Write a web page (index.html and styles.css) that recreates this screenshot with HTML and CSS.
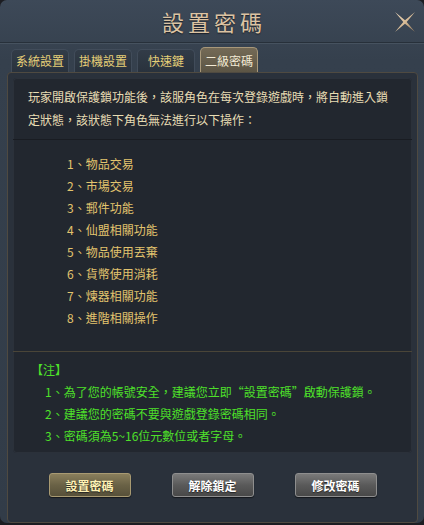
FILE: index.html
```html
<!DOCTYPE html>
<html>
<head>
<meta charset="utf-8">
<link rel="stylesheet" href="styles.css">
</head>
<body>
<div class="window">
    <div class="titlebar">
        <h1 class="title">設置密碼</h1>
        <svg class="close" width="22" height="22" viewBox="0 0 22 22">
            <defs>
                <linearGradient id="xg" x1="0" y1="0" x2="1" y2="1">
                    <stop offset="0" stop-color="#f0dcc0"/>
                    <stop offset="0.5" stop-color="#d8bc98"/>
                    <stop offset="1" stop-color="#8c7458"/>
                </linearGradient>
            </defs>
            <polygon points="1,1 11,9.3 21,1 12.7,11 21,21 11,12.7 1,21 9.3,11" fill="url(#xg)"/>
        </svg>
    </div>

    <div class="tabs">
        <div class="tab">系統設置</div>
        <div class="tab">掛機設置</div>
        <div class="tab">快速鍵</div>
        <div class="tab active">二級密碼</div>
    </div>

    <div class="frame">
        <div class="panel">
            <div class="intro">
                玩家開啟保護鎖功能後，該服角色在每次登錄遊戲時，將自動進入鎖<br>定狀態，該狀態下角色無法進行以下操作：
            </div>
            <ul class="limits">
                <li>1、物品交易</li>
                <li>2、市場交易</li>
                <li>3、郵件功能</li>
                <li>4、仙盟相關功能</li>
                <li>5、物品使用丟棄</li>
                <li>6、貨幣使用消耗</li>
                <li>7、煉器相關功能</li>
                <li>8、進階相關操作</li>
            </ul>
            <div class="note">
                <div class="note-head">【注】</div>
                <div class="note-line">1、為了您的帳號安全，建議您立即“設置密碼”啟動保護鎖。</div>
                <div class="note-line">2、建議您的密碼不要與遊戲登錄密碼相同。</div>
                <div class="note-line">3、密碼須為5~16位元數位或者字母。</div>
            </div>
        </div>
        <div class="buttons">
            <button class="btn gold">設置密碼</button>
            <button class="btn">解除鎖定</button>
            <button class="btn">修改密碼</button>
        </div>
    </div>
</div>
</body>
</html>
```

FILE: styles.css
```css
body {
    margin: 0;
    background-color: #1c1d22;
    font-family: "Noto Sans CJK TC", "Noto Sans CJK SC", sans-serif;
    font-size: 12px;
}

.window {
    width: 424px;
    height: 523px;
    background: linear-gradient(#3d4958, #35404d 60px, #323c48);
    border-radius: 7px;
    overflow: hidden;
}

.titlebar {
    height: 42px;
    border-bottom: 1px solid #27303a;
    box-shadow: 0 1px 0 #46525f;
    display: flex;
    align-items: center;
    justify-content: center;
    position: relative;
}

.title {
    margin: 0;
    font-size: 22px;
    font-weight: normal;
    letter-spacing: 4px;
    padding-left: 4px;
    color: #dcc3a2;
    text-shadow: 0 1px 1px #1c2028;
}

.close {
    position: absolute;
    right: 8px;
    top: 11px;
}

.tabs {
    display: flex;
    align-items: flex-end;
    gap: 5px;
    padding-left: 11px;
    height: 29px;
}

.tab {
    width: 56px;
    height: 22px;
    line-height: 22px;
    text-align: center;
    color: #e6cf78;
    background: linear-gradient(#323c48, #29323d);
    border: 1px solid #414c5a;
    border-bottom: none;
    border-radius: 5px 5px 0 0;
}

.tab.active {
    height: 24px;
    line-height: 26px;
    color: #f2ead4;
    background: linear-gradient(#746a56, #5c5545);
    border-color: #a8987a;
}

.frame {
    margin: 0 6px 0 7px;
    height: 444px;
    border: 1px solid #4f4a41;
    border-radius: 4px;
    background-color: #2a313b;
    padding: 5px 5px 0 5px;
}

.panel {
    background-color: #22272f;
    border-radius: 4px;
    box-shadow: inset 0 0 0 1px #2b313a;
}

.intro {
    color: #e8ddb4;
    line-height: 23px;
    padding: 7px 10px 8px 15px;
    border-bottom: 1px solid #191c22;
}

.limits {
    list-style: none;
    margin: 0;
    padding: 13px 0 22px 54px;
    color: #e2c46e;
    line-height: 22px;
    border-bottom: 1px solid #4a4538;
}

.note {
    color: #4ee02a;
    line-height: 22px;
    padding: 7px 0 6px 18px;
}

.note-line {
    padding-left: 14px;
}

.buttons {
    display: flex;
    justify-content: center;
    gap: 41px;
    margin-top: 20px;
}

.btn {
    width: 82px;
    height: 24px;
    padding: 0;
    font-family: inherit;
    font-size: 12px;
    font-weight: bold;
    color: #ffffff;
    background: linear-gradient(#7a7a7a, #5a5a5a 50%, #484848);
    border: 1px solid #8e8e8e;
    border-radius: 3px;
    box-shadow: 0 1px 1px #15181d;
    text-shadow: 0 1px 1px #222;
}

.btn.gold {
    color: #fff2b4;
    background: linear-gradient(#8a7f5c, #6a6246 50%, #575039);
    border-color: #a89a72;
}
```
